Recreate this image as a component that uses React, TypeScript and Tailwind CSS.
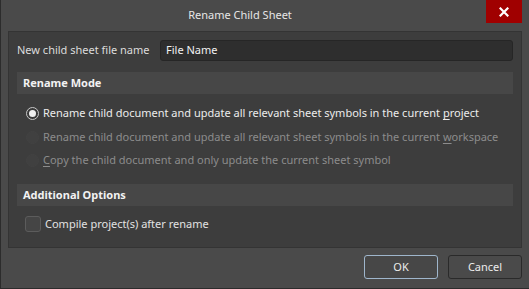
import React from "react";

const font = { fontFamily: "'Noto Sans', 'Open Sans', sans-serif" };

function Radio({ checked, disabled }: { checked?: boolean; disabled?: boolean }) {
  if (disabled) {
    return <span className="w-[13px] h-[13px] rounded-full bg-[#404040] border border-[#424242] shrink-0" />;
  }
  return (
    <span className="w-[13px] h-[13px] rounded-full border border-[#c8c8c8] bg-[#3a3a3a] flex items-center justify-center shrink-0">
      {checked && <span className="w-[7px] h-[7px] rounded-full bg-[#f0f0f0]" />}
    </span>
  );
}

export default function App() {
  return (
    <div
      className="w-[529px] h-[289px] bg-[#4a4a4a] border-l border-b border-[#2c2c2c] flex flex-col text-[11px] text-[#e6e6e6] select-none whitespace-nowrap"
      style={font}
    >
      <div className="relative h-[31px] flex items-center justify-center pr-[50px]">
        <span className="text-[11px] text-[#e6e6e6]">Rename Child Sheet</span>
        <div className="absolute right-[7px] top-0 w-[36px] h-[23px] bg-[#a00000] flex items-center justify-center">
          <svg width="10" height="10" viewBox="0 0 10 10">
            <path d="M1.5 1.5 L8.5 8.5 M8.5 1.5 L1.5 8.5" stroke="#fff" strokeWidth="2.2" strokeLinecap="square" />
          </svg>
        </div>
      </div>
      <div className="mx-[7px] h-[217px] bg-[#3d3d3d] border border-[#343434] px-[8px] pt-[8px] flex flex-col">
        <div className="flex items-center h-[21px]">
          <span className="w-[143px] text-[#dcdcdc]">New child sheet file name</span>
          <div className="flex-1 h-[21px] bg-[#2e2e2e] border border-[#262626] rounded-[3px] flex items-center px-[5px] text-[#f2f2f2]">
            File Name
          </div>
        </div>
        <div className="mt-[11px] h-[22px] bg-[#474747] flex items-center px-[6px] font-bold text-[#f2f2f2]">
          Rename Mode
        </div>
        <div className="flex flex-col pl-[9px] mt-[8px]">
          <div className="h-[23px] flex items-center gap-[4px]">
            <Radio checked />
            <span className="text-[#ececec]">
              Rename child document and update all relevant sheet symbols in the current <span className="underline underline-offset-2">p</span>roject
            </span>
          </div>
          <div className="h-[24px] flex items-center gap-[4px]">
            <Radio disabled />
            <span className="text-[#8c8c8c]">
              Rename child document and update all relevant sheet symbols in the current <span className="underline underline-offset-2">w</span>orkspace
            </span>
          </div>
          <div className="h-[23px] flex items-center gap-[4px]">
            <Radio disabled />
            <span className="text-[#8c8c8c]">
              <span className="underline underline-offset-2">C</span>opy the child document and only update the current sheet symbol
            </span>
          </div>
        </div>
        <div className="mt-[12px] h-[22px] bg-[#474747] flex items-center px-[6px] font-bold text-[#f2f2f2]">
          Additional Options
        </div>
        <div className="mt-[10px] pl-[8px] flex items-center gap-[4px] h-[16px]">
          <span className="w-[16px] h-[16px] rounded-[3px] bg-[#454545] border border-[#5c5c5c]" />
          <span className="text-[#e2e2e2]">Compile project(s) after rename</span>
        </div>
      </div>
      <div className="flex justify-end gap-[10px] mr-[7px] mt-[7px]">
        <div className="w-[74px] h-[24px] rounded-[3px] border border-[#9fb6cc] bg-[#474747] flex items-center justify-center text-[#ececec]">
          OK
        </div>
        <div className="w-[74px] h-[24px] rounded-[3px] border border-[#2a2a2a] bg-[#4a4a4a] flex items-center justify-center text-[#ececec]">
          Cancel
        </div>
      </div>
    </div>
  );
}
